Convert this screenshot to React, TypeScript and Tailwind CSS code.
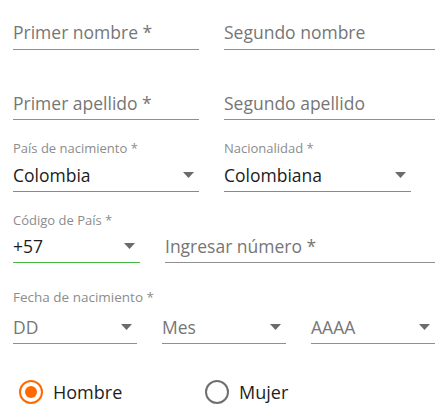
import React from "react";

const Caret = () => (
  <svg width="11" height="6" viewBox="0 0 11 6" className="shrink-0">
    <path d="M0 0 L11 0 L5.5 6 Z" fill="#6b6b6b" />
  </svg>
);

function TextField({ placeholder, className = "", pb = "pb-[6px]" }: { placeholder: string; className?: string; pb?: string }) {
  return (
    <div className={`border-b border-[#8f8f8f] ${pb} ${className}`}>
      <div className="text-[17.5px] leading-[24px] text-[#767676]">{placeholder}</div>
    </div>
  );
}

function SelectField({
  value,
  placeholder = false,
  green = false,
  className = "",
  pb = "pb-[5px]",
}: {
  value: string;
  placeholder?: boolean;
  green?: boolean;
  className?: string;
  pb?: string;
}) {
  return (
    <div className={className}>
      <div
        className={`flex items-center justify-between pr-[5px] ${pb} border-b ${
          green ? "border-[#43b943]" : "border-[#8f8f8f]"
        }`}
      >
        <span className={`text-[17.5px] leading-[24px] ${placeholder ? "text-[#767676]" : "text-[#1b1b1b]"}`}>
          {value}
        </span>
        <Caret />
      </div>
    </div>
  );
}

function Radio({ checked, label }: { checked: boolean; label: string }) {
  return (
    <div className="flex items-center gap-[10px]">
      <div
        className={`w-[24px] h-[24px] rounded-full border-[2.5px] flex items-center justify-center ${
          checked ? "border-[#ff6a00]" : "border-[#6f6f6f]"
        }`}
      >
        {checked && <div className="w-[12px] h-[12px] rounded-full bg-[#ff6a00]" />}
      </div>
      <span className="text-[18px] leading-[24px] text-[#1e1e1e]">{label}</span>
    </div>
  );
}

export default function App() {
  return (
    <div
      className="w-[445px] h-[413px] bg-white pl-[13px] pr-[10px] flex flex-col"
      style={{ fontFamily: '"Open Sans", sans-serif' }}
    >
      {/* Row 1 */}
      <div className="flex gap-[25px] pt-[20px]">
        <TextField placeholder="Primer nombre *" className="w-[186px]" pb="pb-[5px]" />
        <TextField placeholder="Segundo nombre" className="flex-1" pb="pb-[5px]" />
      </div>
      {/* Row 2 */}
      <div className="flex gap-[25px] mt-[41px]">
        <TextField placeholder="Primer apellido *" className="w-[186px]" pb="pb-[4px]" />
        <TextField placeholder="Segundo apellido" className="flex-1" pb="pb-[4px]" />
      </div>
      {/* Row 3 */}
      <div className="flex gap-[25px] mt-[20px]">
        <div className="w-[186px]">
          <div className="text-[13px] leading-[16px] text-[#8c8c8c]">País de nacimiento *</div>
          <div className="mt-[7px]">
            <SelectField value="Colombia" green pb="pb-[4px]" />
          </div>
        </div>
        <div className="w-[187px]">
          <div className="text-[13px] leading-[16px] text-[#8c8c8c]">Nacionalidad *</div>
          <div className="mt-[7px]">
            <SelectField value="Colombiana" green pb="pb-[4px]" />
          </div>
        </div>
      </div>
      {/* Row 4 */}
      <div className="flex gap-[25px] mt-[20px] items-end">
        <div className="w-[127px]">
          <div className="text-[13px] leading-[16px] text-[#8c8c8c]">Código de País *</div>
          <div className="mt-[6px]">
            <SelectField value="+57" green pb="pb-[4px]" />
          </div>
        </div>
        <TextField placeholder="Ingresar número *" className="flex-1" pb="pb-[4px]" />
      </div>
      {/* Row 5 */}
      <div className="mt-[26px]">
        <div className="text-[13.5px] leading-[17px] text-[#8c8c8c]">Fecha de nacimiento *</div>
        <div className="flex gap-[25px] mt-[9px]">
          <SelectField value="DD" placeholder className="w-[124px]" pb="pb-[4px]" />
          <SelectField value="Mes" placeholder className="w-[124px]" pb="pb-[4px]" />
          <SelectField value="AAAA" placeholder className="flex-1" pb="pb-[4px]" />
        </div>
      </div>
      {/* Radios */}
      <div className="flex items-center mt-[36px] pl-[6px]">
        <div className="w-[186px]">
          <Radio checked label="Hombre" />
        </div>
        <Radio checked={false} label="Mujer" />
      </div>
    </div>
  );
}
